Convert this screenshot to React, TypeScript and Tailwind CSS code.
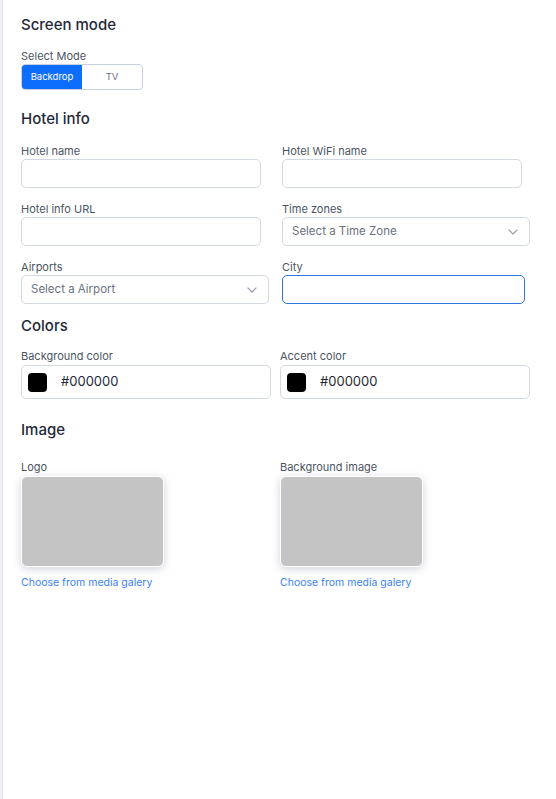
import React from 'react';

const font = { fontFamily: 'Inter, "Noto Sans", sans-serif' };

const Label: React.FC<{ children: React.ReactNode; className?: string }> = ({ children, className = '' }) => (
  <div className={`text-[11px] leading-[14px] text-[#4b5563] ${className}`}>{children}</div>
);

const Chevron = () => (
  <svg width="10" height="6" viewBox="0 0 10 6" fill="none">
    <path d="M1 1l4 4 4-4" stroke="#9ca3af" strokeWidth="1.2" strokeLinecap="round" strokeLinejoin="round" />
  </svg>
);

const SelectBox: React.FC<{ text: string; width: string }> = ({ text, width }) => (
  <div
    className={`${width} h-[29px] mt-[1px] flex items-center justify-between pl-[9px] pr-[11px] border border-[#d3d9e3] rounded-[5px] bg-white`}
  >
    <span className="text-[11.5px] text-[#6b7280]">{text}</span>
    <Chevron />
  </div>
);

const ColorField: React.FC<{ label: string }> = ({ label }) => (
  <div>
    <Label className="mb-[2px]">{label}</Label>
    <div className="h-[34px] flex items-center pl-[6px] border border-[#d3d9e3] rounded-[5px] bg-white">
      <div className="w-[19px] h-[19px] rounded-[4px] bg-black" />
      <span className="ml-[14px] text-[13px] text-[#1f2937]">#000000</span>
    </div>
  </div>
);

const ImagePick: React.FC<{ label: string }> = ({ label }) => (
  <div>
    <Label className="mb-[2px]">{label}</Label>
    <div className="w-[143px] h-[91px] rounded-[6px] bg-[#c4c4c4] border border-white shadow-[0_2px_8px_rgba(100,110,140,0.3)]" />
    <div className="mt-[10px] text-[10.5px] leading-[12px] text-[#3b82f6]">Choose from media galery</div>
  </div>
);

export default function App() {
  return (
    <div className="w-[556px] h-[799px] flex bg-white" style={font}>
      <div className="w-[2px] bg-[#eef0f5]" />
      <div className="w-[1px] bg-[#dfe3ea]" />
      <div className="flex-1 pl-[18px] pt-[15px]">
        <h2 className="text-[15px] leading-[20px] font-medium text-[#1f2937]">Screen mode</h2>

        <Label className="mt-[14px] mb-[1px]">Select Mode</Label>
        <div className="flex w-[122px] h-[26px] border border-[#c9d1e0] rounded-[4px] overflow-hidden">
          <div className="w-[60px] bg-[#0d6efd] text-white text-[9.5px] flex items-center justify-center">Backdrop</div>
          <div className="flex-1 text-[#6b7280] text-[9.5px] flex items-center justify-center">TV</div>
        </div>

        <h2 className="mt-[19px] text-[15px] leading-[20px] font-medium text-[#1f2937]">Hotel info</h2>

        <div className="mt-[15px] grid grid-cols-[247px_247px] gap-x-[14px] gap-y-[14px]">
          <div>
            <Label className="mb-[1px]">Hotel name</Label>
            <div className="w-[240px] h-[29px] border border-[#d3d9e3] rounded-[5px]" />
          </div>
          <div>
            <Label className="mb-[1px]">Hotel WiFi name</Label>
            <div className="w-[240px] h-[29px] border border-[#d3d9e3] rounded-[5px]" />
          </div>
          <div>
            <Label className="mb-[1px]">Hotel info URL</Label>
            <div className="w-[240px] h-[29px] border border-[#d3d9e3] rounded-[5px]" />
          </div>
          <div>
            <Label>Time zones</Label>
            <SelectBox text="Select a Time Zone" width="w-[248px]" />
          </div>
          <div>
            <Label>Airports</Label>
            <SelectBox text="Select a Airport" width="w-[248px]" />
          </div>
          <div>
            <Label className="mb-[1px]">City</Label>
            <div className="w-[243px] h-[29px] border border-[#2f74e0] rounded-[5px]" />
          </div>
        </div>

        <h2 className="mt-[12px] text-[15px] leading-[20px] font-medium text-[#1f2937]">Colors</h2>

        <div className="mt-[13px] grid grid-cols-[250px_250px] gap-x-[9px]">
          <ColorField label="Background color" />
          <ColorField label="Accent color" />
        </div>

        <h2 className="mt-[21px] text-[15px] leading-[20px] font-medium text-[#1f2937]">Image</h2>

        <div className="mt-[20px] grid grid-cols-[250px_250px] gap-x-[9px]">
          <ImagePick label="Logo" />
          <ImagePick label="Background image" />
        </div>
      </div>
    </div>
  );
}
